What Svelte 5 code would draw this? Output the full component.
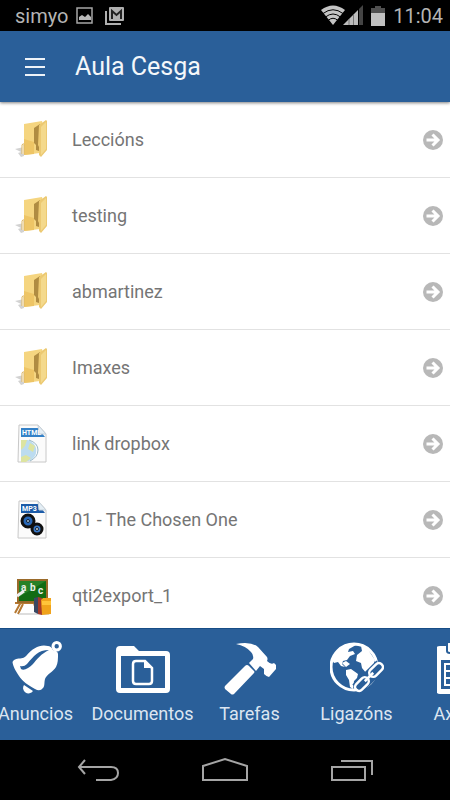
<script lang="ts">
	import { onMount } from 'svelte';

	type Kind = 'folder' | 'html' | 'mp3' | 'quiz';

	const items: { name: string; kind: Kind }[] = [
		{ name: 'Leccións', kind: 'folder' },
		{ name: 'testing', kind: 'folder' },
		{ name: 'abmartinez', kind: 'folder' },
		{ name: 'Imaxes', kind: 'folder' },
		{ name: 'link dropbox', kind: 'html' },
		{ name: '01 - The Chosen One', kind: 'mp3' },
		{ name: 'qti2export_1', kind: 'quiz' }
	];

	const tabs = ['Anuncios', 'Documentos', 'Tarefas', 'Ligazóns', 'Axenda'];

	let current = $state('Documentos');
	let strip: HTMLElement;

	// the tab strip scrolls sideways, start a little way in
	onMount(() => {
		strip.scrollLeft = 18;
	});
</script>

<div class="screen">
	<div class="status">
		<span>simyo</span>
		<svg class="picture" width="17" height="17" viewBox="0 0 17 17" aria-hidden="true">
			<path d="M1 1h15v15H1z" fill="none" stroke="#a6a6a6" stroke-width="1.500" />
			<path d="M3 13V10l3-2 3 2 3-3 3 3v3z" fill="#b8b8b8" />
		</svg>
		<svg width="20" height="18" viewBox="0 0 20 18" aria-hidden="true">
			<path d="M1 4v13h15" fill="none" stroke="#b0b0b0" stroke-width="2" />
			<rect x="4" y="0" width="15" height="14" rx="1" fill="#b0b0b0" />
			<path d="M7 12V4l4.500 4L16 4v8" fill="none" stroke="#222" stroke-width="2" />
		</svg>
		<div class="signals">
			<svg width="44" height="21" viewBox="0 0 44 21" aria-hidden="true">
				<path d="M0 5Q12 -4 24 5L12 20z" fill="#c4c4c4" />
				<g fill="none" stroke="#000">
					<path d="M2 8.500Q12 1 22 8.500M4.500 12Q12 6 19.500 12M7 15.500Q12 11 17 15.500" />
				</g>
				<path d="M22 20L37 5v15z" fill="#bdbdbd" />
				<path d="M38 4l4-4v20h-4z" fill="#444" />
				<path d="M28 14v6M32.500 10v10" stroke="#777" />
			</svg>
			<svg width="14" height="20" viewBox="0 0 14 20" aria-hidden="true">
				<path d="M4 0h6v2h4v6H0V2h4z" fill="#505050" />
				<path d="M0 7h14v13H0z" fill="#c0c0c0" />
			</svg>
			<span>11:04</span>
		</div>
	</div>

	<header>
		<button class="menu" aria-label="Menu">
			<svg width="20" height="18" viewBox="0 0 20 18" aria-hidden="true">
				<path d="M0 1h20M0 9h20M0 17h20" stroke="#eef3f8" stroke-width="2" />
			</svg>
		</button>
		<h1>Aula Cesga</h1>
	</header>

	<main>
		<ul>
			{#each items as item}
				<li>
					<button class="row">
						<svg class="file" width="40" height="42" viewBox="0 0 40 42" aria-hidden="true">
							{#if item.kind === 'folder'}
								<path d="M3 30l9-2v9l-3 1-3-4 3-1z" fill="#d2d2d2" />
								<path d="M12 5l18-3 1 4-3 28-16 2z" fill="#f5d580" />
								<path d="M12 20l10 3v12l-10 1z" fill="#eec566" />
								<path d="M22 9l6-4v21l-1 6-3-1v-5l-2-2z" fill="#b08c42" />
								<path d="M27 6l7-5 1 1v29l-6 7-2-2v-8l-1-2z" fill="#ecc972" />
								<path d="M29 8l5-5v27l-5 6z" fill="#f4d98c" />
								<path d="M10 35v-9q2-3 2 1v8" fill="#fff" stroke="#dcb766" />
							{:else if item.kind === 'quiz'}
								<path d="M9 27L3 38M11 29l-5 10M3 28h24M22 29l5 9" fill="none" stroke="#b67932" stroke-width="2" />
								<path d="M8 38h29v2H6z" fill="#ddd" />
								<rect x="5" y="4" width="31" height="24" fill="#9a6a2a" />
								<rect x="7" y="6" width="27" height="20" fill="#116c13" />
								<path d="M7 6h27L7 22z" fill="#278127" />
								<path d="M5 21l7-5" stroke="#eee" stroke-width="3" />
								<g class="chalk">
									<text x="9" y="16">a</text>
									<text x="18" y="16">b</text>
									<text x="26" y="19">c</text>
								</g>
								<path d="M22 23l4-1v17l-4-2z" fill="#394863" />
								<path d="M26 22l4 1v17l-4-1z" fill="#a73a28" />
								<path d="M29 25l2-2h8v16l-9 1z" fill="#f0a31b" />
								<path d="M30 26h9v4h-9z" fill="#ffc53a" />
							{:else}
								<path d="M7 2h19l8 9v28H6z" fill="#fbfbfb" stroke="#c8c8c8" />
								<path d="M9 5h17l7 9H9z" fill={item.kind === 'mp3' ? '#1b5ba8' : '#3481c7'} />
								<path d="M26 2l8 9h-7z" fill="#e4eef5" stroke="#c5d0d8" />
								{#if item.kind === 'html'}
									<text class="ext" x="10" y="12">HTML</text>
									<path d="M9 17h7a11 11 0 0 1 1 21H9z" fill="#bcdcf0" />
									<path d="M9 17h6l-2 6-4 4zM18 20l5 3-2 6-5-3zM9 34l5-2 5 3-5 4H9z" fill="#dde4a0" />
									<path d="M17 17q9 3 9 10t-8 11" fill="none" stroke="#9cbac9" />
								{:else}
									<text class="ext" x="10" y="12">MP3</text>
									<circle cx="16" cy="22" r="6" fill="#2868b9" stroke="#111" stroke-width="3" />
									<circle cx="16" cy="22" r="1.500" fill="#acc8e5" stroke="#123" />
									<circle cx="25" cy="30" r="5" fill="#3978c8" stroke="#111" stroke-width="3" />
									<circle cx="25" cy="30" r="1.500" fill="#ddd" stroke="#123" />
								{/if}
							{/if}
						</svg>
						<span class="name">{item.name}</span>
						<svg width="20" height="20" viewBox="0 0 20 20" aria-hidden="true">
							<circle cx="10" cy="10" r="10" fill="#b8b8b8" />
							<path d="M3.500 10H14M9.500 4.500L15 10l-5.500 5.500" fill="none" stroke="#fff" stroke-width="3" />
						</svg>
					</button>
				</li>
			{/each}
		</ul>
	</main>

	<nav class="tabs" bind:this={strip}>
		{#each tabs as tab}
			<button class="tab" aria-pressed={current === tab} onclick={() => (current = tab)}>
				<svg width="54" height="54" viewBox="0 0 54 54" aria-hidden="true">
					{#if tab === 'Anuncios'}
						<circle cx="47.700" cy="5.300" r="3.700" fill="none" stroke="#fff" stroke-width="3" />
						<path d="M39 5q3 0 5 4 5 1 5 4c0 5 0 9-2 13-3 5-9 7-11 12-1 4 0 7-2 9q-3 4-8 1C19 44 13 40 10 35 6 29 4 25 3.500 21q1-3 6-3.500c5 0 6-1 8-3C24 7 31 3 39 5z" fill="#fff" />
						<path d="M11 25q4 1 7-2C25 15 29 9 40 9c-8 4-12 9-16 14-4 4-9 7-12 5z" fill="#2a5f99" />
						<path d="M15 44l9 6a5 5 0 1 1-9-6z" fill="#fff" />
					{:else if tab === 'Documentos'}
						<path fill-rule="evenodd" d="M4 5h14l5 5h27q4 0 4 4v34q0 4-4 4H4q-4 0-4-4V9q0-4 4-4zM5 15v32h44V15z" fill="#fff" />
						<path d="M20 20h9l7 7v13q0 3-3 3H20q-3 0-3-3V23q0-3 3-3z" fill="none" stroke="#fff" stroke-width="2.500" />
						<path d="M28 19v8h9z" fill="#fff" />
					{:else if tab === 'Tarefas'}
						<path d="M13 3q15-3 22 3l9 10q1 2 0 4 4 4 7 2l2 2v4l-7 8q-2 0-5-3v-5l-4-3-4 5-7-8 4-4q1-4-2-7-5-6-15-8z" fill="#fff" />
						<path d="M22 25q2-2 4 0l5 5q1 1 0 2L11 53q-2 1-3 0l-6-5q-1-2 0-3z" fill="#fff" />
					{:else if tab === 'Ligazóns'}
						<circle cx="24" cy="26" r="23" fill="none" stroke="#fff" stroke-width="3" />
						<path d="M4 14Q10 4 20 3l6 1-7 4-1 3 5-1 2 3-5 2-3 4-4 1-1 3 3 3-4-1-3-4-4 1-2-3z" fill="#fff" />
						<path d="M16 29l5-1 7 5-1 4-3 3-1 8-3-2-1-7-3-5zM12 22l4-2 4 3-4 3z" fill="#fff" />
						<path d="M31 5l6 2 8 12-1 3 2 5-6 2-3 4-5-6-1-5-5-2 1-6 5-4z" fill="#fff" />
						<g transform="rotate(-45 39 36)" fill="none">
							<path d="M22 36h34" stroke="#2a5f99" stroke-width="13" />
							<rect x="21" y="32" width="16" height="8" rx="4" stroke="#fff" stroke-width="2.500" />
							<rect x="41" y="32" width="16" height="8" rx="4" stroke="#fff" stroke-width="2.500" />
							<path d="M33 36h12" stroke="#fff" stroke-width="2.500" />
						</g>
					{:else}
						<path fill-rule="evenodd" d="M3 5h48q3 0 3 3v42q0 3-3 3H3q-4 0-4-4V8q0-3 4-3zM4 19v29h46V19z" fill="#fff" />
						<path d="M11 1q-1 0-1 2v7q0 2 3 2t3-2V1zM38 1v9q0 2 3 2t3-2V1z" fill="#fff" stroke="#2a5f99" stroke-width="2" />
						<path d="M8 23h38v21H8zM8 30h38M8 37h38M17 23v21M27 23v21M37 23v21" fill="none" stroke="#fff" stroke-width="2" />
					{/if}
				</svg>
				<span>{tab}</span>
			</button>
		{/each}
	</nav>

	<div class="system">
		<button aria-label="Back">
			<svg width="44" height="26" viewBox="0 0 44 26" aria-hidden="true">
				<path d="M9 3L3 10l6 7M3 10h32q7 0 7 6t-7 7H20" />
			</svg>
		</button>
		<button aria-label="Home">
			<svg width="48" height="26" viewBox="0 0 48 26" aria-hidden="true">
				<path d="M2 9l22-7 22 7v14H2z" />
			</svg>
		</button>
		<button aria-label="Recent apps">
			<svg width="44" height="26" viewBox="0 0 44 26" aria-hidden="true">
				<path d="M2 10h33v13H2zM11 4h31v14" />
			</svg>
		</button>
	</div>
</div>

<style>
	:global(body) {
		background: #000;
	}

	.screen {
		display: flex;
		flex-direction: column;
		height: 100vh;
		font-family: Roboto, 'Liberation Sans', sans-serif;
		background: #fff;
	}

	button {
		padding: 0;
		border: 0;
		background: none;
		color: inherit;
		font: inherit;
		cursor: pointer;
	}

	svg {
		display: block;
		flex: none;
	}

	.status {
		display: flex;
		flex: none;
		align-items: center;
		gap: 12px;
		height: 31px;
		padding: 0 7px 0 15px;
		background: #000;
		color: #b4b4b4;
		font-size: 20px;
	}

	.picture {
		margin-left: -4px;
	}

	.signals {
		display: flex;
		align-items: center;
		gap: 6px;
		margin-left: auto;
	}

	.signals span {
		margin-left: 2px;
	}

	header {
		position: relative;
		display: flex;
		flex: none;
		align-items: center;
		height: 71px;
		background: #2a5f99;
		box-shadow: 0 1px 3px rgba(0, 0, 0, 0.5);
	}

	.menu {
		display: flex;
		align-items: center;
		height: 48px;
		padding: 0 20px 0 25px;
	}

	h1 {
		margin: 0 0 0 5px;
		color: #f4f7fa;
		font-size: 25px;
		font-weight: 400;
	}

	.menu + h1 {
		padding-left: 5px;
	}

	main {
		flex: 1;
		min-height: 0;
		overflow-y: auto;
		scrollbar-width: none;
	}

	ul {
		margin: 0;
		padding: 0;
		list-style: none;
	}

	li {
		border-bottom: 1px solid #e2e2e2;
	}

	.row {
		display: flex;
		align-items: center;
		width: 100%;
		height: 75px;
		padding: 0 7px 0 12px;
		text-align: left;
	}

	.name {
		flex: 1;
		margin-left: 20px;
		color: #757575;
		font-size: 18px;
	}

	.ext {
		fill: #fff;
		font-size: 7px;
		font-weight: 700;
	}

	.chalk {
		fill: #e8efe8;
		font-size: 10px;
		font-weight: 700;
	}

	.tabs {
		display: flex;
		flex: none;
		height: 112px;
		overflow-x: auto;
		background: #2a5f99;
		box-shadow: inset 0 1px #174d86;
		scrollbar-width: none;
	}

	.tab {
		display: flex;
		flex: none;
		flex-direction: column;
		align-items: center;
		gap: 8px;
		width: 107px;
		padding-top: 13px;
		color: #dce6f1;
		font-size: 18px;
	}

	.system {
		display: flex;
		flex: none;
		align-items: center;
		justify-content: space-between;
		height: 60px;
		padding: 0 76px;
		background: #000;
	}

	.system path {
		fill: none;
		stroke: #a5a5a5;
		stroke-width: 2px;
	}
</style>
